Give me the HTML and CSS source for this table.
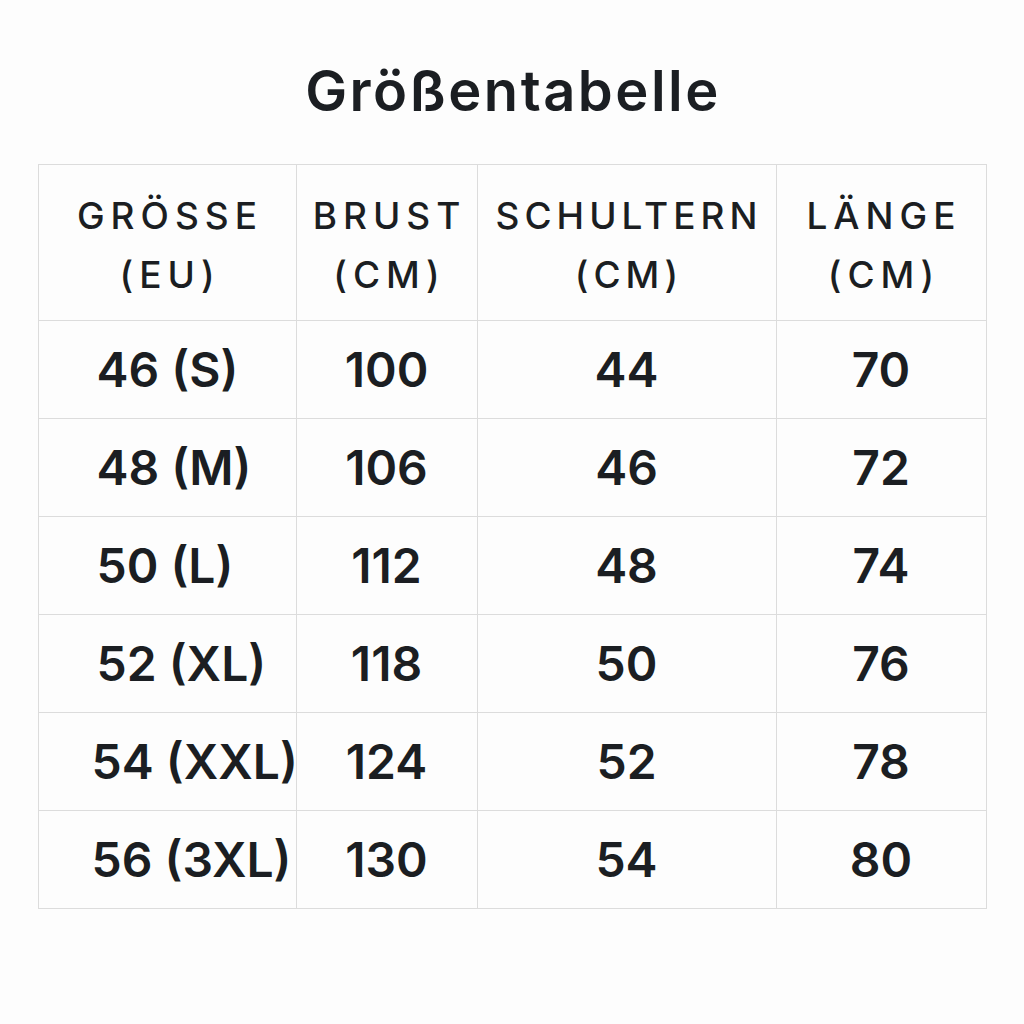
FILE: index.html
```html
<!DOCTYPE html>
<html lang="de">
<head>
<meta charset="utf-8">
<title>Größentabelle</title>
<link rel="stylesheet" href="styles.css">
</head>
<body>
<main class="page">
  <h1 class="title">Größentabelle</h1>
  <table class="sizes">
    <colgroup>
      <col class="c1"><col class="c2"><col class="c3"><col class="c4">
    </colgroup>
    <thead>
      <tr>
        <th>GRÖSSE<br>(EU)</th>
        <th>BRUST<br>(CM)</th>
        <th class="narrow">SCHULTERN<br>(CM)</th>
        <th>LÄNGE<br>(CM)</th>
      </tr>
    </thead>
    <tbody>
      <tr><td class="size">46 (S)</td><td>100</td><td>44</td><td>70</td></tr>
      <tr><td class="size">48 (M)</td><td>106</td><td>46</td><td>72</td></tr>
      <tr><td class="size">50 (L)</td><td>112</td><td>48</td><td>74</td></tr>
      <tr><td class="size">52 (XL)</td><td>118</td><td>50</td><td>76</td></tr>
      <tr><td class="size wide">54 (XXL)</td><td>124</td><td>52</td><td>78</td></tr>
      <tr><td class="size wide">56 (3XL)</td><td>130</td><td>54</td><td>80</td></tr>
    </tbody>
  </table>
</main>
</body>
</html>
```

FILE: styles.css
```css
html, body {
  margin: 0;
  padding: 0;
  background: #fdfdfd;
}
body {
  font-family: Inter, "Noto Sans", sans-serif;
  color: #1b1e22;
}
.page {
  display: flex;
  flex-direction: column;
  align-items: center;
  padding-top: 59px;
}
.title {
  margin: 0 0 41px 0;
  padding-left: 2px;
  font-size: 56px;
  font-weight: 600;
  line-height: 64px;
  letter-spacing: 2.5px;
}
.sizes {
  border-collapse: collapse;
  width: 948px;
  table-layout: fixed;
}
.c1 { width: 258px; }
.c2 { width: 181px; }
.c3 { width: 299px; }
.c4 { width: 210px; }
.sizes th, .sizes td {
  border: 1px solid #dcdcdc;
  text-align: center;
  vertical-align: middle;
  padding: 0;
}
.sizes th {
  height: 156px;
  padding: 4px 0 0 6px;
  box-sizing: border-box;
  font-size: 37px;
  font-weight: 500;
  line-height: 59px;
  letter-spacing: 6px;
  white-space: nowrap;
}
.sizes th.narrow {
  letter-spacing: 5px;
  padding-left: 5px;
}
.sizes td {
  height: 97px;
  font-size: 48px;
  font-weight: 600;
  white-space: nowrap;
}
.sizes td.size {
  text-align: left;
  padding-left: 58px;
}
.sizes td.size.wide {
  padding-left: 53px;
}
```
